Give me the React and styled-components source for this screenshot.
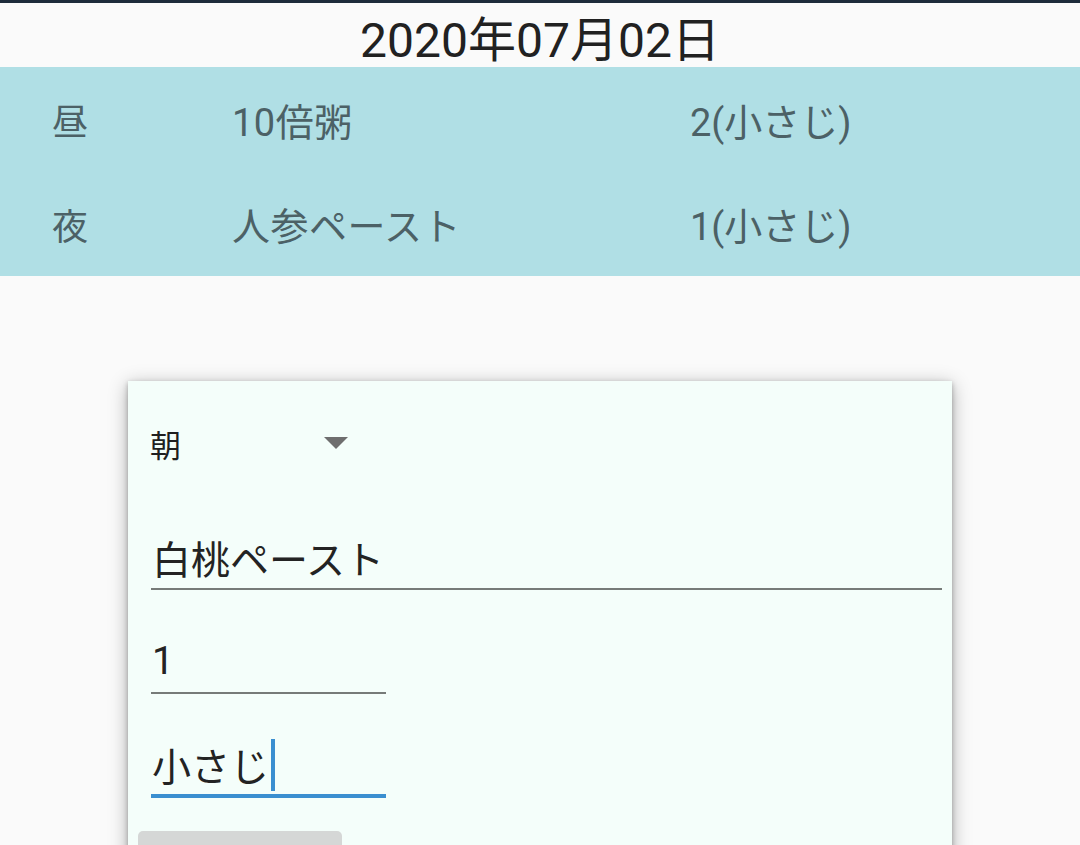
import React from "react";
import styled, { createGlobalStyle } from "styled-components";

const Global = createGlobalStyle`
  html, body { margin: 0; padding: 0; background: #fafafa; }
  body { font-family: Roboto, "Noto Sans CJK JP", sans-serif; overflow: hidden; }
  * { box-sizing: border-box; }
`;

const Page = styled.div`
  width: 1080px;
  height: 845px;
  overflow: hidden;
  background: #fafafa;
  border-top: 3px solid #1d2b3b;
`;

const DateHeader = styled.div`
  height: 64px;
  display: flex;
  align-items: center;
  justify-content: center;
  font-size: 48px;
  color: #212121;
  padding-top: 2px;
`;

const Band = styled.div`
  background: #b0dfe5;
  padding: 0 0 0 52px;
`;

const Row = styled.div`
  height: 104.5px;
  display: grid;
  grid-template-columns: 180px 458px 1fr;
  align-items: center;
  font-size: 38px;
  color: #4c6166;
`;

const Label = styled.span`
  font-size: 36px;
`;

const Name = styled.span`
  letter-spacing: 0.5px;
`;

const Card = styled.div`
  margin: 105px 0 0 128px;
  width: 824px;
  height: 600px;
  background: #f4fefa;
  box-shadow: 0 2px 5px rgba(0,0,0,0.28), 0 4px 18px rgba(0,0,0,0.3);
  padding: 34px 10px 0 22px;
  display: flex;
  flex-direction: column;
`;

const Select = styled.div`
  width: 208px;
  height: 56px;
  display: flex;
  align-items: center;
  justify-content: space-between;
  font-size: 31px;
  color: #1f1f1f;
  padding-right: 10px;
`;

const Arrow = styled.span`
  width: 0;
  height: 0;
  border-left: 12px solid transparent;
  border-right: 12px solid transparent;
  border-top: 12px solid #6e6e6e;
`;

const Field = styled.div`
  margin-left: 1px;
  width: ${p => p.$w};
  height: 64px;
  margin-top: ${p => p.$mt}px;
  display: flex;
  align-items: center;
  padding-left: 1px;
  font-size: 39px;
  color: #232323;
  border-bottom: ${p => (p.$focus ? "4px solid #3a8fd0" : "2px solid #767b78")};
`;

const Caret = styled.span`
  display: inline-block;
  width: 4px;
  height: 52px;
  background: #3a8fd0;
  margin-left: 2px;
  margin-top: 2px;
`;

const Button = styled.div`
  margin: 33px 0 0 -12px;
  width: 204px;
  height: 60px;
  border-radius: 5px;
  background: #d5d7d6;
`;

const rows = [
  { t: "昼", n: "10倍粥", a: "2(小さじ)" },
  { t: "夜", n: "人参ペースト", a: "1(小さじ)" },
];

export default function App() {
  return (
    <>
      <Global />
      <Page>
        <DateHeader>2020年07月02日</DateHeader>
        <Band>
          {rows.map(r => (
            <Row key={r.t}>
              <Label>{r.t}</Label>
              <Name>{r.n}</Name>
              <span>{r.a}</span>
            </Row>
          ))}
        </Band>
        <Card>
          <Select>
            <span>朝</span>
            <Arrow />
          </Select>
          <Field $w="791px" $mt={55}>白桃ペースト</Field>
          <Field $w="235px" $mt={40}>1</Field>
          <Field $w="235px" $mt={40} $focus>
            小さじ<Caret />
          </Field>
          <Button />
        </Card>
      </Page>
    </>
  );
}
